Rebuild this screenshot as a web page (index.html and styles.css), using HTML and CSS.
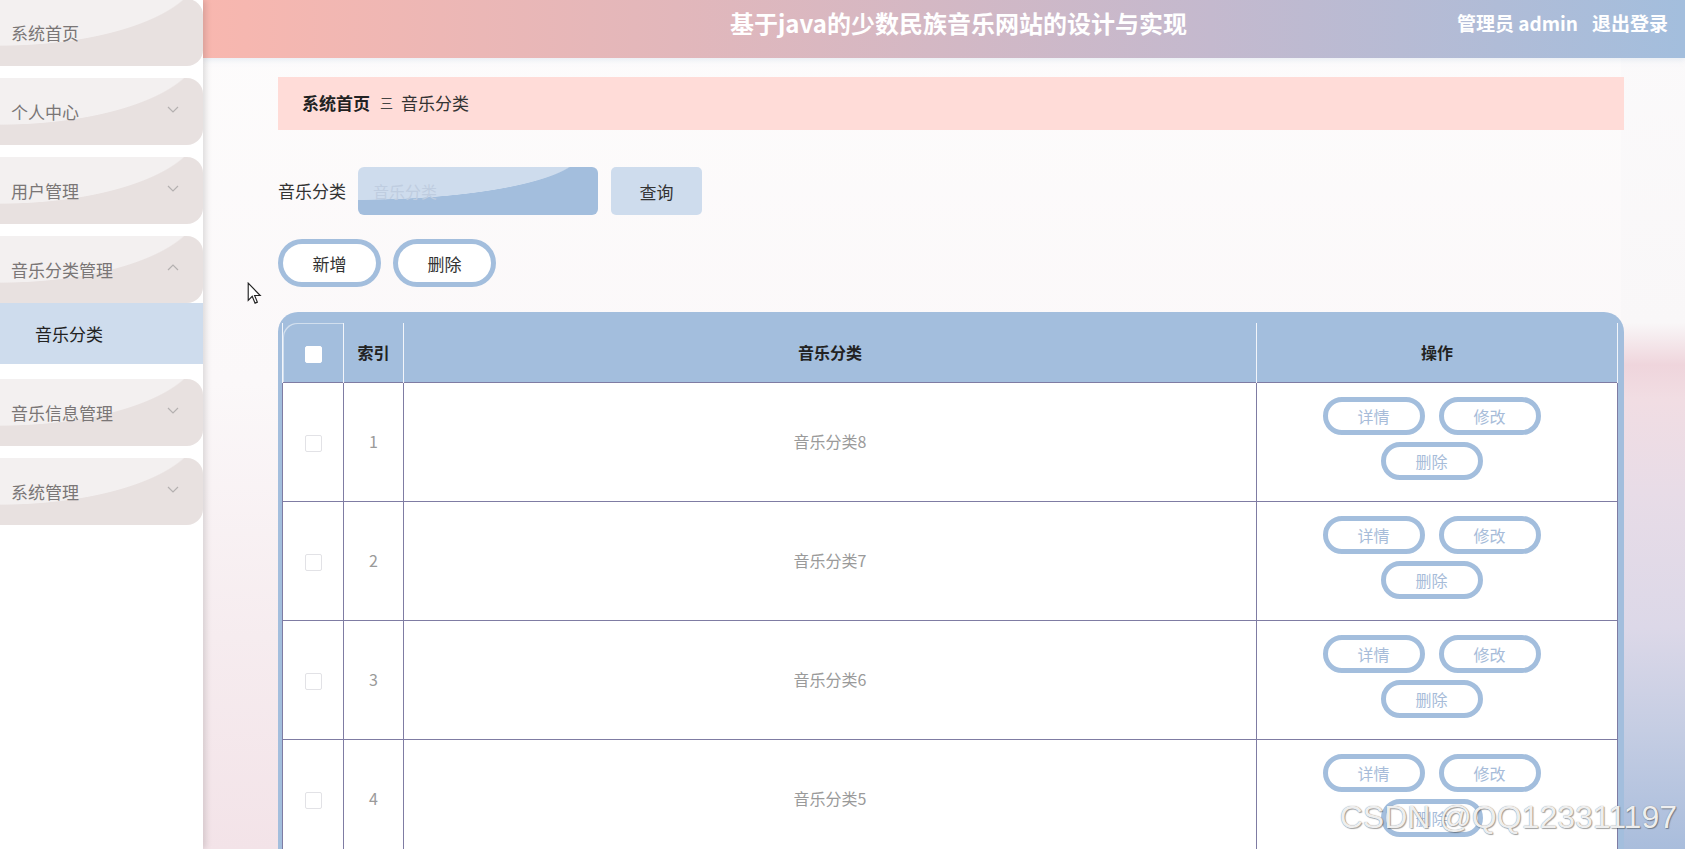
FILE: index.html
```html
<!DOCTYPE html>
<html lang="zh-CN">
  <head>
    <meta charset="UTF-8" />
    <meta name="viewport" content="width=device-width, initial-scale=1.0" />
    <title>音乐分类</title>
    <link rel="stylesheet" href="styles.css">
  </head>
  <body>
    <div class="layout">
      <!-- Side menu -->
      <aside class="sidebar">
        <nav class="menu">
          <div class="menu-item"><span>系统首页</span></div>
          <div class="menu-item"><span>个人中心</span>
            <svg class="chev" viewBox="0 0 12 7"><polyline points="1,1 6,6 11,1" /></svg>
          </div>
          <div class="menu-item"><span>用户管理</span>
            <svg class="chev" viewBox="0 0 12 7"><polyline points="1,1 6,6 11,1" /></svg>
          </div>
          <div class="menu-group">
            <div class="menu-item"><span>音乐分类管理</span>
              <svg class="chev" viewBox="0 0 12 7"><polyline points="1,6 6,1 11,6" /></svg>
            </div>
            <div class="submenu-item">音乐分类</div>
          </div>
          <div class="menu-item"><span>音乐信息管理</span>
            <svg class="chev" viewBox="0 0 12 7"><polyline points="1,1 6,6 11,1" /></svg>
          </div>
          <div class="menu-item"><span>系统管理</span>
            <svg class="chev" viewBox="0 0 12 7"><polyline points="1,1 6,6 11,1" /></svg>
          </div>
        </nav>
      </aside>

      <div class="main">
        <header class="topbar">
          <h1 class="title">基于java的少数民族音乐网站的设计与实现</h1>
          <div class="user">
            <span>管理员 admin</span>
            <span>退出登录</span>
          </div>
        </header>

        <div class="content">
          <div class="breadcrumb">
            <span class="crumb-home">系统首页</span>
            <span class="crumb-sep">三</span>
            <span class="crumb-current">音乐分类</span>
          </div>

          <div class="search">
            <label class="search-label">音乐分类</label>
            <input class="search-input" type="text" placeholder="音乐分类">
            <button class="search-button">查询</button>
          </div>

          <div class="actions">
            <button class="pill-button">新增</button>
            <button class="pill-button">删除</button>
          </div>

          <div class="table-wrap">
            <table class="grid">
              <colgroup>
                <col class="col-check"><col class="col-index"><col><col class="col-ops">
              </colgroup>
              <thead>
                <tr>
                  <th><span class="check check-head"></span></th>
                  <th>索引</th>
                  <th>音乐分类</th>
                  <th>操作</th>
                </tr>
              </thead>
              <tbody>
                <tr>
                  <td><span class="check"></span></td>
                  <td>1</td>
                  <td>音乐分类8</td>
                  <td class="ops-cell"><div class="ops"><button class="op-button">详情</button><button class="op-button">修改</button><button class="op-button">删除</button></div></td>
                </tr>
                <tr>
                  <td><span class="check"></span></td>
                  <td>2</td>
                  <td>音乐分类7</td>
                  <td class="ops-cell"><div class="ops"><button class="op-button">详情</button><button class="op-button">修改</button><button class="op-button">删除</button></div></td>
                </tr>
                <tr>
                  <td><span class="check"></span></td>
                  <td>3</td>
                  <td>音乐分类6</td>
                  <td class="ops-cell"><div class="ops"><button class="op-button">详情</button><button class="op-button">修改</button><button class="op-button">删除</button></div></td>
                </tr>
                <tr>
                  <td><span class="check"></span></td>
                  <td>4</td>
                  <td>音乐分类5</td>
                  <td class="ops-cell"><div class="ops"><button class="op-button">详情</button><button class="op-button">修改</button><button class="op-button">删除</button></div></td>
                </tr>
              </tbody>
            </table>
          </div>
        </div>
      </div>
    </div>

    <!-- overlays from the capture -->
    <svg class="cursor" viewBox="0 0 13 21"><path d="M1 1 L1 16 L4.5 12.5 L7 18.5 L9 17.6 L6.6 11.8 L11.5 11.8 Z" /></svg>
    <div class="watermark">CSDN @QQ123311197</div>
  </body>
</html>
```

FILE: styles.css
```css
/* Base */
body { margin: 0; height: 100vh; overflow: hidden; font-family: "Noto Sans CJK SC", "Noto Sans", sans-serif; color: #333; background: #fff; }
button, input { font-family: inherit; }
.layout { display: flex; height: 100vh; }

/* Sidebar */
.sidebar { flex: none; width: 203px; background: #fff; box-shadow: 3px 0 6px rgba(0, 0, 0, 0.12); z-index: 2; }
.menu { display: flex; flex-direction: column; gap: 12px; margin-top: -1px; }
.menu-group { display: flex; flex-direction: column; }
.menu-item { height: 67px; display: flex; align-items: center; justify-content: space-between; padding: 0 24px 0 11px; box-sizing: border-box; border-radius: 0 16px 16px 0; font-size: 17px; color: #7a7676;
  background: radial-gradient(ellipse 201px 77px at 0 -30px, #f3f0f0 0, #f3f0f0 99%, #e8e1e0 100%); }
.chev { width: 12px; height: 7px; fill: none; stroke: #b4b0b0; stroke-width: 1.2; margin-top: -4px; }
.submenu-item { height: 61px; margin-bottom: 3px; display: flex; align-items: center; padding-left: 35px; background: #cedced; font-size: 17px; color: #222; }

/* Main area */
.main { flex: 1; display: flex; flex-direction: column; min-width: 0;
  background:
    linear-gradient(180deg, #fbfafb 0%, #f9f7f8 38%, #efd5dc 43%, #f1dde3 47%, #e8dce7 58%, #dcd8e8 74%, #c5cde3 86%, #a9bddc 100%) right top / 64px 100% no-repeat,
    linear-gradient(180deg, #fdfcfc 0%, #fbf8f9 45%, #f6ecef 75%, #f3e3e8 100%); }
.topbar { flex: none; height: 58px; display: flex; align-items: center; padding: 0 17px 13px 527px; box-sizing: border-box; color: #fff;
  background: linear-gradient(90deg, #f8b7af 0%, #e2b7bb 32%, #c4b9ce 68%, #a3bedd 100%); box-shadow: 0 2px 6px rgba(163, 190, 221, 0.25); }
.title { margin: 0; font-size: 24px; font-weight: bold; }
.user { margin-left: auto; display: flex; gap: 14px; font-size: 19px; font-weight: bold; }

.content { padding: 19px 61px 0 75px; }

/* Breadcrumb */
.breadcrumb { height: 53px; display: flex; align-items: center; padding: 0 0 2px 24px; box-sizing: border-box; background: #ffdcd8; font-size: 17px; }
.crumb-home { font-weight: bold; color: #222; }
.crumb-sep { font-size: 13px; color: #444; margin: 0 8px 0 10px; }
.crumb-current { color: #333; }

/* Search */
.search { display: flex; align-items: center; margin-top: 37px; height: 48px; }
.search-label { font-size: 17px; color: #333; margin-right: 12px; padding-bottom: 2px; }
.search-input { width: 240px; height: 48px; box-sizing: border-box; border: none; border-radius: 6px; padding: 0 15px; font-size: 16px; outline: none;
  background: radial-gradient(ellipse 224px 48px at 0 -15px, #cedced 0, #cedced 99%, #a3bedd 100%); }
.search-input::placeholder { color: #bfcde0; }
.search-button { margin-left: 13px; width: 91px; height: 48px; border: none; border-radius: 5px; background: #cedced; font-size: 17px; color: #333; }

/* Action buttons */
.actions { display: flex; gap: 12px; margin-top: 24px; }
.pill-button { width: 103px; height: 48px; border: 5px solid #a3bedd; border-radius: 24px; background: #fff; font-size: 17px; color: #333; }

/* Table */
.table-wrap { margin-top: 25px; padding: 11px 6px 0 4px; background: #a3bedd; border-radius: 20px 20px 0 0; }
.grid { width: 100%; border-collapse: collapse; table-layout: fixed; }
.col-check { width: 61px; }
.col-index { width: 60px; }
.col-ops { width: 361px; }
.grid thead tr { height: 59px; }
.grid th { font-size: 16px; font-weight: bold; color: #222; border-left: 1px solid #f2f5fa; border-right: 1px solid #f2f5fa; padding-bottom: 2px; }
.grid th:first-child { border-top-left-radius: 14px; box-shadow: inset 1px 1px 0 rgba(255, 255, 255, 0.5); }
.grid tbody tr { height: 119px; }
.grid td { background: #fff; border: 1px solid #7f7ca3; text-align: center; vertical-align: middle; font-size: 16px; color: #9a9a9a; padding: 0 0 2px; }
.check { display: inline-block; width: 15px; height: 15px; border: 1px solid #e2e2e6; border-radius: 2px; background: #fff; vertical-align: middle; }
.check-head { border-color: #fff; }
.ops-cell { padding: 0 11px 7px 0 !important; }
.ops { display: flex; flex-wrap: wrap; justify-content: center; gap: 7px 14px; width: 218px; margin: 0 auto; }
.op-button { width: 102px; height: 38px; border: 5px solid #a3bedd; border-radius: 19px; background: #fff; font-size: 16px; color: #a7bcd9; }

/* Capture overlays */
.cursor { position: absolute; left: 247px; top: 282px; width: 15px; height: 24px; fill: #fff; stroke: #222; stroke-width: 1; }
.watermark { position: absolute; right: 8px; bottom: 13px; font-family: "Liberation Sans", sans-serif; font-size: 32px; color: rgba(255, 255, 255, 0.9);
  text-shadow: 0 0 1px #777, 1px 1px 1px rgba(0, 0, 0, 0.35); }
```
